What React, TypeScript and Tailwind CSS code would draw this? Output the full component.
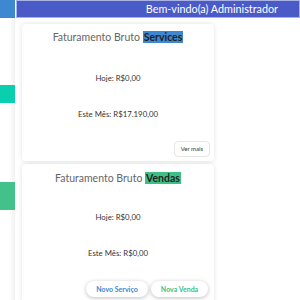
import React from 'react';

const font = { fontFamily: 'Lato, "Open Sans", sans-serif' };

export default function App() {
  return (
    <div className="flex w-[300px] h-[300px] overflow-hidden bg-white" style={font}>
      {/* Sidebar */}
      <div className="w-[15px] shrink-0 flex flex-col bg-gradient-to-r from-white from-60% to-[#f1f1f1]">
        <div className="h-[18px] bg-[#3d88d0]"></div>
        <div className="h-[67px]"></div>
        <div className="h-[18px] bg-[#0acfae]"></div>
        <div className="h-[79px]"></div>
        <div className="h-[28px] bg-[#42c28a]"></div>
      </div>

      <div className="flex-1 flex flex-col ml-px">
        <div className="h-[18px] shrink-0 bg-[#4a5bc8] border border-[#aab3e6] flex items-center justify-end pr-[21px]">
          <span className="text-white text-[10.8px] leading-none">Bem-vindo(a) Administrador</span>
        </div>

        <div className="pl-[6px] pt-[6px] flex flex-col gap-[3px] w-[198px] shrink-0">
          {/* Card 1 */}
          <div className="h-[137px] shrink-0 bg-white rounded shadow-[0_0_5px_rgba(0,0,0,0.12)] flex flex-col items-center pt-[6px] relative">
            <div className="text-[10.5px] leading-[14px] text-[#666]">
              Faturamento Bruto <span className="font-bold text-[#222] bg-[#3d88d0] px-px">Services</span>
            </div>
            <div className="text-[7.8px] leading-[12px] text-[#333] mt-[28px]">Hoje: R$0,00</div>
            <div className="text-[7.8px] leading-[12px] text-[#333] mt-[24px]">Este Mês: R$17.190,00</div>
            <div className="absolute right-[4px] bottom-[4px] border border-[#e6e6e6] rounded-sm px-[6px] py-[4px] text-[6px] leading-none text-[#333]">
              Ver mais
            </div>
          </div>

          {/* Card 2 */}
          <div className="h-[140px] shrink-0 bg-white rounded shadow-[0_0_5px_rgba(0,0,0,0.12)] flex flex-col items-center pt-[7px]">
            <div className="text-[10.5px] leading-[14px] text-[#666]">
              Faturamento Bruto <span className="font-bold text-[#222] bg-[#3dbf86] px-px">Vendas</span>
            </div>
            <div className="text-[7.8px] leading-[12px] text-[#333] mt-[26px]">Hoje: R$0,00</div>
            <div className="text-[7.8px] leading-[12px] text-[#333] mt-[24px]">Este Mês: R$0,00</div>
            <div className="self-stretch flex justify-end gap-[3px] mt-[22px] pr-[6px]">
              <div className="w-[62px] h-[16px] flex items-center justify-center rounded-full bg-white shadow-[0_1px_4px_rgba(0,0,0,0.25)] text-[7px] font-bold text-[#3d88d0]">
                Novo Serviço
              </div>
              <div className="w-[57px] h-[16px] flex items-center justify-center rounded-full bg-white shadow-[0_1px_4px_rgba(0,0,0,0.25)] text-[7px] font-bold text-[#3dbf86]">
                Nova Venda
              </div>
            </div>
          </div>
        </div>
      </div>
    </div>
  );
}
